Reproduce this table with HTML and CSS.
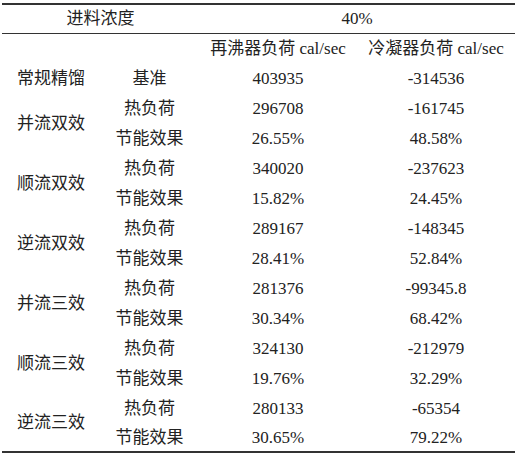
FILE: index.html
```html
<!DOCTYPE html>
<html>
	<head>
		<meta charset="utf-8">
		<title>进料浓度 40%</title>
		<link rel="stylesheet" href="styles.css">
	</head>
	<body>
		<table class="data">
			<colgroup>
				<col class="c-group">
				<col class="c-item">
				<col class="c-val">
				<col class="c-val">
			</colgroup>
			<thead>
				<tr class="head-top">
					<th colspan="2">进料浓度</th>
					<th colspan="2">40%</th>
				</tr>
				<tr>
					<th></th>
					<th></th>
					<th>再沸器负荷 cal/sec</th>
					<th>冷凝器负荷 cal/sec</th>
				</tr>
			</thead>
			<tbody>
				<tr>
					<td>常规精馏</td>
					<td>基准</td>
					<td>403935</td>
					<td>-314536</td>
				</tr>
				<tr>
					<td rowspan="2">并流双效</td>
					<td>热负荷</td>
					<td>296708</td>
					<td>-161745</td>
				</tr>
				<tr>
					<td>节能效果</td>
					<td>26.55%</td>
					<td>48.58%</td>
				</tr>
				<tr>
					<td rowspan="2">顺流双效</td>
					<td>热负荷</td>
					<td>340020</td>
					<td>-237623</td>
				</tr>
				<tr>
					<td>节能效果</td>
					<td>15.82%</td>
					<td>24.45%</td>
				</tr>
				<tr>
					<td rowspan="2">逆流双效</td>
					<td>热负荷</td>
					<td>289167</td>
					<td>-148345</td>
				</tr>
				<tr>
					<td>节能效果</td>
					<td>28.41%</td>
					<td>52.84%</td>
				</tr>
				<tr>
					<td rowspan="2">并流三效</td>
					<td>热负荷</td>
					<td>281376</td>
					<td>-99345.8</td>
				</tr>
				<tr>
					<td>节能效果</td>
					<td>30.34%</td>
					<td>68.42%</td>
				</tr>
				<tr>
					<td rowspan="2">顺流三效</td>
					<td>热负荷</td>
					<td>324130</td>
					<td>-212979</td>
				</tr>
				<tr>
					<td>节能效果</td>
					<td>19.76%</td>
					<td>32.29%</td>
				</tr>
				<tr>
					<td rowspan="2">逆流三效</td>
					<td>热负荷</td>
					<td>280133</td>
					<td>-65354</td>
				</tr>
				<tr class="last">
					<td>节能效果</td>
					<td>30.65%</td>
					<td>79.22%</td>
				</tr>
			</tbody>
		</table>
	</body>
</html>
```

FILE: styles.css
```css
*{
	margin: 0;
	padding: 0;
}
body{
	background-color: #ffffff;
	padding: 3px 0 0 2px;
	font-family: "Liberation Serif", "Noto Sans CJK SC", serif;
	font-size: 17px;
	color: #222222;
}
.data{
	width: 513px;
	border-collapse: collapse;
	table-layout: fixed;
	border-top: 2px solid #333333;
	border-bottom: 2px solid #333333;
}
.data .c-group{
	width: 98px;
}
.data .c-item{
	width: 99px;
}
.data .c-val{
	width: 158px;
}
.data th,.data td{
	height: 30px;
	padding: 0;
	text-align: center;
	vertical-align: middle;
	font-weight: normal;
	line-height: 20px;
	white-space: nowrap;
}
.data .head-top th{
	height: 28px;
	border-bottom: 1px solid #333333;
}
.data .last td{
	height: 27px;
}
```
